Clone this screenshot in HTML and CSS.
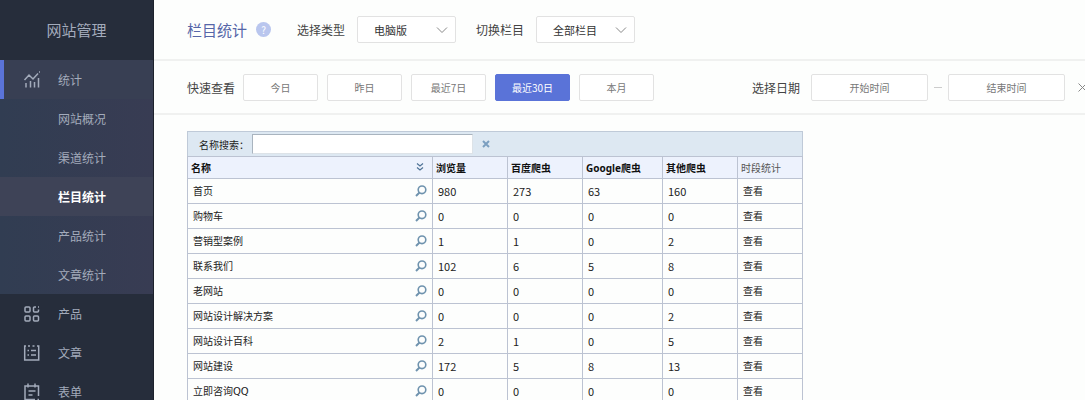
FILE: index.html
```
<!DOCTYPE html>
<html lang="zh-CN">
<head>
    <meta charset="UTF-8">
    <title>栏目统计</title>
    <link rel="stylesheet" href="styles.css">
</head>
<body>

    <!-- Shared icons -->
    <svg class="hidden">
        <symbol id="icon-search" viewBox="0 0 12 12">
            <circle cx="7" cy="4.8" r="3.8" fill="none" stroke="#6f93ae" stroke-width="1.6" />
            <path d="M4.5 7.5L1 11" fill="none" stroke="#6f93ae" stroke-width="2" />
        </symbol>
        <symbol id="icon-down" viewBox="0 0 12 8">
            <path d="M1 1.5l5 5 5-5" fill="none" stroke="#888" stroke-width="1" />
        </symbol>
    </svg>

    <div class="layout">

        <!-- Sidebar -->
        <aside class="sidebar">
            <div class="brand">网站管理</div>
            <nav>
                <div class="group open">
                    <a href="#" class="item current">
                        <svg class="icon" width="18" height="18" viewBox="0 0 18 18">
                            <path d="M1.5 9L6 4l4 4 5-5.5M3 12v4.5M7.500 10v6.500M11.500 11v5.500M15.500 7v9.500M16 1h1" />
                        </svg>
                        统计
                    </a>
                    <a href="#" class="sub">网站概况</a>
                    <a href="#" class="sub">渠道统计</a>
                    <a href="#" class="sub active">栏目统计</a>
                    <a href="#" class="sub">产品统计</a>
                    <a href="#" class="sub">文章统计</a>
                </div>
                <a href="#" class="item">
                    <svg class="icon" width="18" height="18" viewBox="0 0 18 18">
                        <rect x="2" y="2" width="5" height="5" rx="1" />
                        <path d="M13 2h-1.5a1 1 0 0 0-1 1v3a1 1 0 0 0 1 1h3a1 1 0 0 0 1-1V4.5M15 2h1" />
                        <rect x="2" y="11" width="5" height="5" rx="1" />
                        <rect x="10.5" y="11" width="5" height="5" rx="1" />
                    </svg>
                    产品
                </a>
                <a href="#" class="item">
                    <svg class="icon" width="18" height="18" viewBox="0 0 18 18">
                        <path d="M3 2H1.7v14h14V2H14M5 2h2M9.5 2h2M4.5 6.5H6M8 6.5h5M4.5 11H6M8 11h5" />
                    </svg>
                    文章
                </a>
                <a href="#" class="item">
                    <svg class="icon" width="18" height="18" viewBox="0 0 18 18">
                        <path d="M12 16.5H2V3h13.5v10M5 .5v4M12 .5v4M5.5 8h7M5.5 12h4M14.5 16.5H16" />
                    </svg>
                    表单
                </a>
            </nav>
        </aside>

        <main class="main">

            <!-- Title bar -->
            <header class="bar title-bar">
                <h1>栏目统计</h1>
                <button type="button" class="help" title="帮助">?</button>
                <label for="type">选择类型</label>
                <div class="select">
                    <select id="type">
                        <option>电脑版</option>
                        <option>手机版</option>
                    </select>
                    <svg width="12" height="8"><use href="#icon-down" /></svg>
                </div>
                <label for="column">切换栏目</label>
                <div class="select">
                    <select id="column">
                        <option>全部栏目</option>
                    </select>
                    <svg width="12" height="8"><use href="#icon-down" /></svg>
                </div>
            </header>

            <!-- Date filter -->
            <div class="bar filter-bar">
                <span class="text">快速查看</span>
                <div class="ranges">
                    <button type="button">今日</button>
                    <button type="button">昨日</button>
                    <button type="button">最近7日</button>
                    <button type="button" class="active">最近30日</button>
                    <button type="button">本月</button>
                </div>
                <div class="dates">
                    <label for="start">选择日期</label>
                    <input type="text" id="start" placeholder="开始时间">
                    <span class="dash"></span>
                    <input type="text" id="end" placeholder="结束时间" aria-label="结束时间">
                    <button type="button" class="clear" aria-label="清除日期">
                        <svg width="9" height="9" viewBox="0 0 9 9"><path d="M.5.5l8 8M8.5.5l-8 8" stroke="#888" /></svg>
                    </button>
                </div>
            </div>

            <!-- Statistics table -->
            <section class="report">
                <div class="search">
                    <label for="keyword">名称搜索：</label>
                    <input type="text" id="keyword">
                    <button type="button" aria-label="清空">
                        <svg width="8" height="8" viewBox="0 0 8 8"><path d="M1 1l6 6M7 1L1 7" stroke="#7b9fc0" stroke-width="2" /></svg>
                    </button>
                </div>
                <table>
                    <thead>
                        <tr>
                            <th class="name">
                                <div class="cell">名称
                                    <svg width="12" height="8" viewBox="0 0 12 8"><path d="M2 .5L5 3 8 .5M2 4.500L5 7l3-2.500" fill="none" stroke="#4f7396" stroke-width="1.2" /></svg>
                                </div>
                            </th>
                            <th>浏览量</th>
                            <th>百度爬虫</th>
                            <th class="wide">Google爬虫</th>
                            <th>其他爬虫</th>
                            <th class="view">时段统计</th>
                        </tr>
                    </thead>
                    <tbody>
                        <tr>
                            <td><div class="cell">首页 <svg width="12" height="12"><use href="#icon-search" /></svg></div></td>
                            <td class="num">980</td>
                            <td class="num">273</td>
                            <td class="num">63</td>
                            <td class="num">160</td>
                            <td><a href="#">查看</a></td>
                        </tr>
                        <tr>
                            <td><div class="cell">购物车 <svg width="12" height="12"><use href="#icon-search" /></svg></div></td>
                            <td class="num">0</td>
                            <td class="num">0</td>
                            <td class="num">0</td>
                            <td class="num">0</td>
                            <td><a href="#">查看</a></td>
                        </tr>
                        <tr>
                            <td><div class="cell">营销型案例 <svg width="12" height="12"><use href="#icon-search" /></svg></div></td>
                            <td class="num">1</td>
                            <td class="num">1</td>
                            <td class="num">0</td>
                            <td class="num">2</td>
                            <td><a href="#">查看</a></td>
                        </tr>
                        <tr>
                            <td><div class="cell">联系我们 <svg width="12" height="12"><use href="#icon-search" /></svg></div></td>
                            <td class="num">102</td>
                            <td class="num">6</td>
                            <td class="num">5</td>
                            <td class="num">8</td>
                            <td><a href="#">查看</a></td>
                        </tr>
                        <tr>
                            <td><div class="cell">老网站 <svg width="12" height="12"><use href="#icon-search" /></svg></div></td>
                            <td class="num">0</td>
                            <td class="num">0</td>
                            <td class="num">0</td>
                            <td class="num">0</td>
                            <td><a href="#">查看</a></td>
                        </tr>
                        <tr>
                            <td><div class="cell">网站设计解决方案 <svg width="12" height="12"><use href="#icon-search" /></svg></div></td>
                            <td class="num">0</td>
                            <td class="num">0</td>
                            <td class="num">0</td>
                            <td class="num">2</td>
                            <td><a href="#">查看</a></td>
                        </tr>
                        <tr>
                            <td><div class="cell">网站设计百科 <svg width="12" height="12"><use href="#icon-search" /></svg></div></td>
                            <td class="num">2</td>
                            <td class="num">1</td>
                            <td class="num">0</td>
                            <td class="num">5</td>
                            <td><a href="#">查看</a></td>
                        </tr>
                        <tr>
                            <td><div class="cell">网站建设 <svg width="12" height="12"><use href="#icon-search" /></svg></div></td>
                            <td class="num">172</td>
                            <td class="num">5</td>
                            <td class="num">8</td>
                            <td class="num">13</td>
                            <td><a href="#">查看</a></td>
                        </tr>
                        <tr>
                            <td><div class="cell">立即咨询QQ <svg width="12" height="12"><use href="#icon-search" /></svg></div></td>
                            <td class="num">0</td>
                            <td class="num">0</td>
                            <td class="num">0</td>
                            <td class="num">0</td>
                            <td><a href="#">查看</a></td>
                        </tr>
                    </tbody>
                </table>
            </section>
        </main>
    </div>
</body>
</html>
```

FILE: styles.css
```
* {
    box-sizing: border-box;
}

body {
    margin: 0;
    font-family: "Noto Sans CJK SC", sans-serif;
    font-size: 12px;
    color: #444;
    background: #fdfefd;
}

a {
    color: inherit;
    text-decoration: none;
}

button, input, select {
    margin: 0;
    padding: 0;
    font-family: inherit;
    font-size: 10px;
    color: #777;
    background: white;
    border: 1px solid #e2e2e2;
    border-radius: 2px;
}

button {
    cursor: pointer;
}

.hidden {
    display: none;
}

.layout {
    display: flex;
    height: 100vh;
    overflow: hidden;
}

/* Sidebar */
.sidebar {
    flex: 0 0 154px;
    color: #a3abbb;
    background: #262d3b;
    border-right: 1px solid #1d222c;
}

.brand {
    height: 60px;
    line-height: 60px;
    text-align: center;
    font-size: 15px;
}

.group.open {
    background: linear-gradient(to right, #313d52, #383c53);
}

.item, .sub {
    display: flex;
    align-items: center;
    height: 39px;
}

.item {
    gap: 17px;
    padding-left: 23px;
}

    .item.current {
        padding-left: 19px;
        border-left: 4px solid #5a73d8;
        background: #383f53;
    }

.sub {
    padding-left: 58px;
}

    .sub.active {
        color: white;
        font-weight: bold;
        background: #3e4357;
    }

.icon {
    fill: none;
    stroke: #a3abbb;
    stroke-width: 1.5;
}

/* Top bars */
.main {
    flex: 1;
    min-width: 0;
}

.bar {
    display: flex;
    align-items: center;
    padding-left: 33px;
    border-bottom: 2px solid #f0f1f0;
}

.title-bar {
    height: 61px;
}

    .title-bar h1 {
        margin: 0;
        font-size: 15px;
        font-weight: normal;
        color: #5666a8;
    }

    .title-bar label {
        margin-right: 12px;
    }

.help {
    width: 15px;
    height: 15px;
    margin: 0 26px 0 9px;
    line-height: 15px;
    color: white;
    background: #b9c6ee;
    border: none;
    border-radius: 50%;
}

.select {
    position: relative;
    margin-right: 20px;
}

    .select select {
        appearance: none;
        width: 99px;
        height: 27px;
        padding-left: 16px;
        font-size: 11px;
        color: #333;
    }

    .select svg {
        position: absolute;
        top: 10px;
        right: 8px;
        pointer-events: none;
    }

.filter-bar {
    height: 54px;
}

.ranges {
    display: flex;
    gap: 9px;
    margin-left: 8px;
}

    .ranges button {
        width: 75px;
        height: 27px;
    }

        .ranges button.active {
            color: white;
            background: #5a73d8;
            border-color: #5a73d8;
        }

.dates {
    display: flex;
    align-items: center;
    margin-left: auto;
}

    .dates input {
        width: 117px;
        height: 27px;
        text-align: center;
    }

        .dates input::placeholder {
            color: #777;
        }

    .dates label {
        margin-right: 11px;
    }

.dash {
    width: 8px;
    height: 1px;
    margin: 0 6px;
    background: #ccc;
}

.dates .clear {
    display: flex;
    width: 20px;
    padding-left: 13px;
    background: none;
    border: none;
    overflow: hidden;
}

    .clear svg {
        flex: none;
    }

/* Statistics table */
.report {
    width: 616px;
    margin: 16px 0 0 33px;
    font-size: 10px;
    color: #222;
}

.search {
    display: flex;
    align-items: center;
    height: 25px;
    padding-left: 11px;
    background: #dde8f2;
    border: 1px solid #bfcad8;
    border-bottom: none;
}

    .search label {
        width: 53px;
        font-family: "Noto Sans CJK SC", sans-serif;
    }

    .search input {
        width: 221px;
        height: 20px;
        padding: 0 4px;
        border-color: #a9b4bf #dde3e8 #dde3e8 #a9b4bf;
        border-radius: 0;
    }

    .search button {
        display: flex;
        margin-left: 9px;
        background: none;
        border: none;
    }

table {
    width: 100%;
    table-layout: fixed;
    border-collapse: collapse;
}

th, td {
    height: 25px;
    padding: 0 0 1px 5px;
    text-align: left;
    border: 1px solid #bcc3d2;
}

th {
    height: 22px;
    padding-left: 3px;
    font-family: "Noto Sans", "Noto Sans CJK SC", sans-serif;
    color: #111;
    background: #edf2fd;
}

td {
    font-family: "DejaVu Sans", "Noto Sans CJK SC", sans-serif;
}

    th.name {
        width: 245px;
    }

    th.wide {
        width: 80px;
    }

    th.view {
        width: 65px;
        font-weight: normal;
        color: #555;
    }

.cell {
    display: flex;
    align-items: center;
    justify-content: space-between;
    padding-right: 5px;
}

td.num {
    font-family: "Noto Sans CJK SC", sans-serif;
    font-size: 11px;
}
```
